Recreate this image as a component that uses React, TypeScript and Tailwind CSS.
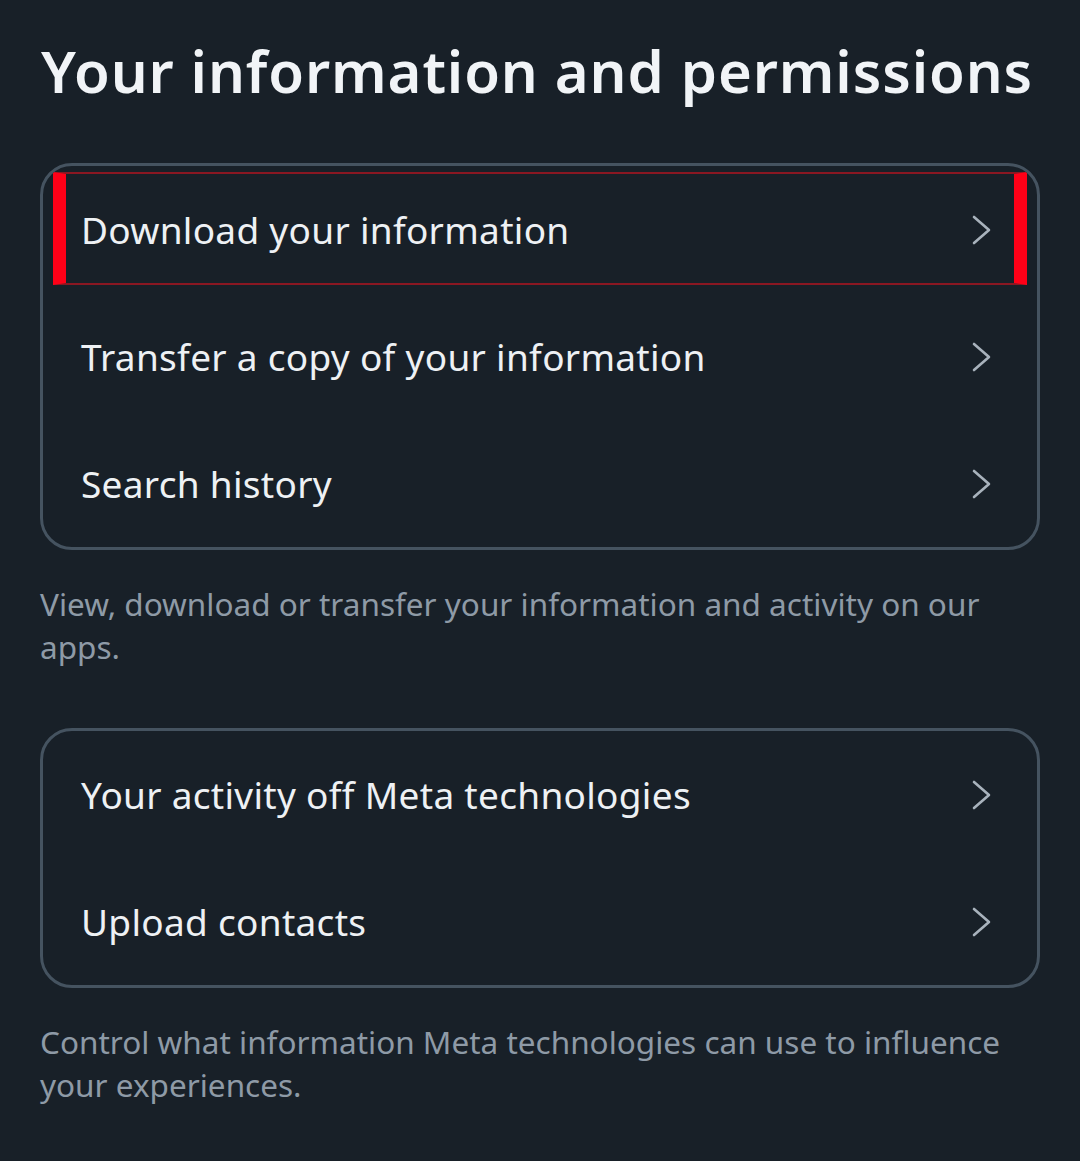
type Item = { label: string; marked?: boolean };

const GROUPS: { items: Item[]; note: string }[] = [
    {
        items: [
            { label: "Download your information", marked: true },
            { label: "Transfer a copy of your information" },
            { label: "Search history" },
        ],
        note: "View, download or transfer your information and activity on our apps.",
    },
    {
        items: [
            { label: "Your activity off Meta technologies" },
            { label: "Upload contacts" },
        ],
        note: "Control what information Meta technologies can use to influence your experiences.",
    },
];

function Chevron() {
    return (
        <svg width="22" height="32" viewBox="0 0 22 32" fill="none" className="text-[#a8b2bc]">
            <polyline points="3,3 18,16 3,29" stroke="currentColor" strokeWidth="2.6" strokeLinecap="round" strokeLinejoin="round" />
        </svg>
    );
}

function Row({ item }: { item: Item }) {
    return (
        <div className="relative flex items-center h-[127px] pl-[38px] pr-[44px]">
            {item.marked && (
                // annotation box over the first row
                <div className="absolute left-[10px] right-[10px] top-[6px] bottom-[8px] border-y-2 border-x-[13px] border-y-[#8a1722] border-x-[#ff0017]" />
            )}
            <span className="flex-1 text-[37px] text-[#eef1f4] tracking-[0.3px]">{item.label}</span>
            <Chevron />
        </div>
    );
}

export default function App() {
    return (
        <div className="min-h-[1161px] bg-[#182028] px-[40px] pt-[33px]" style={{ fontFamily: '"Noto Sans", "Open Sans", sans-serif' }}>
            <h1 className="text-[58px] font-semibold text-[#f1f4f7] leading-[76px] tracking-[0.9px] pl-[1px] whitespace-nowrap">Your information and permissions</h1>

            <div className="mt-[54px] space-y-[60px]">
                {GROUPS.map((g, i) => (
                    <div key={i}>
                        <div className="border-[3px] border-[#455360] rounded-[32px] overflow-hidden">
                            {g.items.map(item => <Row key={item.label} item={item} />)}
                        </div>
                        <p className="mt-[32px] text-[31.5px] leading-[43px] text-[#8e9aa6]">{g.note}</p>
                    </div>
                ))}
            </div>
        </div>
    );
}
